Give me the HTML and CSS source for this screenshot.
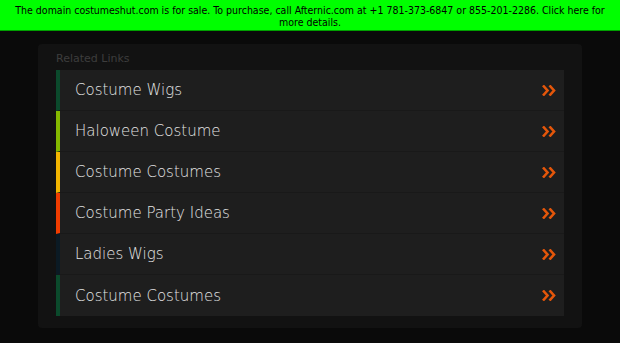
FILE: index.html
```html
<!DOCTYPE html>
<html lang="en">
<head>
    <meta charset="UTF-8">
    <title>costumeshut.com</title>
    <link rel="stylesheet" href="styles.css">
</head>
<body>

    <a class="sale-banner" href="#">The domain costumeshut.com is for sale. To purchase, call Afternic.com at +1 781-373-6847 or 855-201-2286. Click here for more details.</a>

    <div class="page">
        <div class="links-panel">
            <h2>Related Links</h2>

            <ul class="links">
                <li class="c1"><a href="#">Costume Wigs <span class="arrow"><svg width="14" height="11" viewBox="0 0 14 11"><path d="M1 0.5 L5.5 5.5 L1 10.5 M7.5 0.5 L12 5.5 L7.5 10.5" fill="none" stroke="#e4560a" stroke-width="2.6"/></svg></span></a></li>
                <li class="c2"><a href="#">Haloween Costume <span class="arrow"><svg width="14" height="11" viewBox="0 0 14 11"><path d="M1 0.5 L5.5 5.5 L1 10.5 M7.5 0.5 L12 5.5 L7.5 10.5" fill="none" stroke="#e4560a" stroke-width="2.6"/></svg></span></a></li>
                <li class="c3"><a href="#">Costume Costumes <span class="arrow"><svg width="14" height="11" viewBox="0 0 14 11"><path d="M1 0.5 L5.5 5.5 L1 10.5 M7.5 0.5 L12 5.5 L7.5 10.5" fill="none" stroke="#e4560a" stroke-width="2.6"/></svg></span></a></li>
                <li class="c4"><a href="#">Costume Party Ideas <span class="arrow"><svg width="14" height="11" viewBox="0 0 14 11"><path d="M1 0.5 L5.5 5.5 L1 10.5 M7.5 0.5 L12 5.5 L7.5 10.5" fill="none" stroke="#e4560a" stroke-width="2.6"/></svg></span></a></li>
                <li class="c5"><a href="#">Ladies Wigs <span class="arrow"><svg width="14" height="11" viewBox="0 0 14 11"><path d="M1 0.5 L5.5 5.5 L1 10.5 M7.5 0.5 L12 5.5 L7.5 10.5" fill="none" stroke="#e4560a" stroke-width="2.6"/></svg></span></a></li>
                <li class="c1"><a href="#">Costume Costumes <span class="arrow"><svg width="14" height="11" viewBox="0 0 14 11"><path d="M1 0.5 L5.5 5.5 L1 10.5 M7.5 0.5 L12 5.5 L7.5 10.5" fill="none" stroke="#e4560a" stroke-width="2.6"/></svg></span></a></li>
            </ul>
        </div>
    </div>

</body>
</html>
```

FILE: styles.css
```css
body {
    margin: 0;
    background-color: #0a0a0a;
    font-family: "DejaVu Sans", sans-serif;
}

/* Barra verde do topo */
.sale-banner {
    display: block;
    background-color: #00ff00;
    border-bottom: 1px solid #00a000;
    color: #000;
    text-decoration: none;
    text-align: center;
    font-family: "DejaVu Sans Condensed", "DejaVu Sans", sans-serif;
    font-size: 10.5px;
    line-height: 12px;
    padding: 4px 14px 2px;
}

.page {
    padding: 13px 38px 15px;
}

.links-panel {
    background-color: #121212;
    border-radius: 4px;
    padding: 8px 18px 12px 18px;
}

.links-panel h2 {
    margin: 0 0 5px 0;
    font-size: 11px;
    font-weight: normal;
    color: #3d3d3d;
    line-height: 13px;
}

.links {
    list-style: none;
    margin: 0;
    padding: 0;
}

.links li {
    background-color: #1e1e1e;
    border-left: 4px solid #0b4a2c;
    border-bottom: 1px solid #191919;
}

.links li:last-child {
    border-bottom: none;
}

.links a {
    display: flex;
    justify-content: space-between;
    align-items: center;
    height: 40px;
    padding: 0 8px 0 15px;
    color: #e4e4e4;
    text-decoration: none;
    font-size: 15px;
    font-weight: 200;
}

.links li:last-child a {
    height: 41px;
}

.arrow {
    display: flex;
}

.links li.c1 { border-left-color: #0b4a2c; }
.links li.c2 { border-left-color: #84b800; }
.links li.c3 { border-left-color: #f2b500; }
.links li.c4 { border-left-color: #f03c00; }
.links li.c5 { border-left-color: #0b1a24; }
```
